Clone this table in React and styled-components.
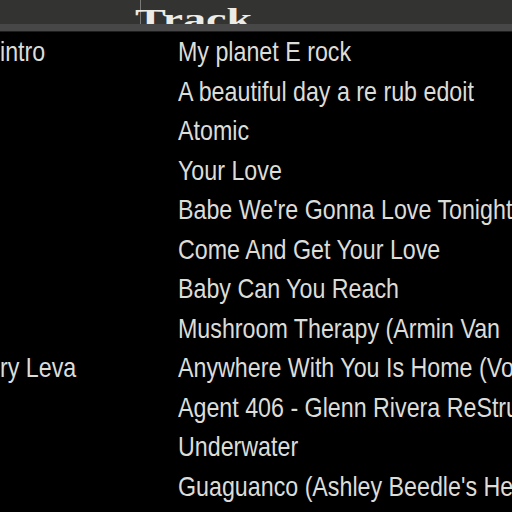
import React from "react";
import styled, { createGlobalStyle } from "styled-components";

const GlobalStyle = createGlobalStyle`
  html, body {
    margin: 0;
    padding: 0;
    background: #000;
  }
`;

const Window = styled.div`
  width: 512px;
  height: 512px;
  overflow: hidden;
  background: #000;
  display: flex;
  flex-direction: column;
`;

const Header = styled.div`
  display: flex;
  flex-direction: column;
  flex-shrink: 0;
`;

const HeaderRow = styled.div`
  height: 24px;
  overflow: hidden;
  background: #333331;
  display: grid;
  grid-template-columns: 140px 1fr;
`;

const HeaderCell = styled.div`
  position: relative;
  border-left: ${(p) => (p.divider ? "1px solid #7a7a7a" : "none")};
`;

const HeaderLabel = styled.span`
  display: block;
  margin: 4px 0 0 -6px;
  font-family: "Liberation Serif", serif;
  font-weight: 700;
  font-size: 30px;
  line-height: 30px;
  color: #ecebe6;
  transform: scaleX(1.54);
  transform-origin: left top;
  white-space: nowrap;
`;

const HeaderStrip = styled.div`
  height: 7px;
  background: #474747;
  border-bottom: 1px solid #1e1e1e;
`;

const List = styled.div`
  display: flex;
  flex-direction: column;
`;

const Row = styled.div`
  height: 39.5px;
  display: grid;
  grid-template-columns: 140px 1fr;
  font-family: "Liberation Sans", Arial, sans-serif;
  font-size: 28px;
  line-height: 39.5px;
  color: #dcdcd8;
`;

const Cell = styled.div`
  overflow: hidden;
  white-space: nowrap;
  padding-left: ${(p) => p.pad || 0}px;
`;

const Text = styled.span`
  display: inline-block;
  transform: scaleX(0.83);
  transform-origin: left center;
`;

const tracks = [
  { artist: "intro", title: "My planet E rock" },
  { artist: "", title: "A beautiful day a re rub edoit" },
  { artist: "", title: "Atomic" },
  { artist: "", title: "Your Love" },
  { artist: "", title: "Babe We're Gonna Love Tonight" },
  { artist: "", title: "Come And Get Your Love" },
  { artist: "", title: "Baby Can You Reach" },
  { artist: "", title: "Mushroom Therapy (Armin Van" },
  { artist: "ry Leva", title: "Anywhere With You Is Home (Vocal Mix)" },
  { artist: "", title: "Agent 406 - Glenn Rivera ReStructure Mix" },
  { artist: "", title: "Underwater" },
  { artist: "", title: "Guaguanco (Ashley Beedle's Heavy Dub)" },
];

export default function App() {
  return (
    <>
      <GlobalStyle />
      <Window>
        <Header>
          <HeaderRow>
            <HeaderCell />
            <HeaderCell divider>
              <HeaderLabel>Track</HeaderLabel>
            </HeaderCell>
          </HeaderRow>
          <HeaderStrip />
        </Header>
        <List>
          {tracks.map((t, i) => (
            <Row key={i}>
              <Cell>
                <Text>{t.artist}</Text>
              </Cell>
              <Cell pad={38}>
                <Text>{t.title}</Text>
              </Cell>
            </Row>
          ))}
        </List>
      </Window>
    </>
  );
}
